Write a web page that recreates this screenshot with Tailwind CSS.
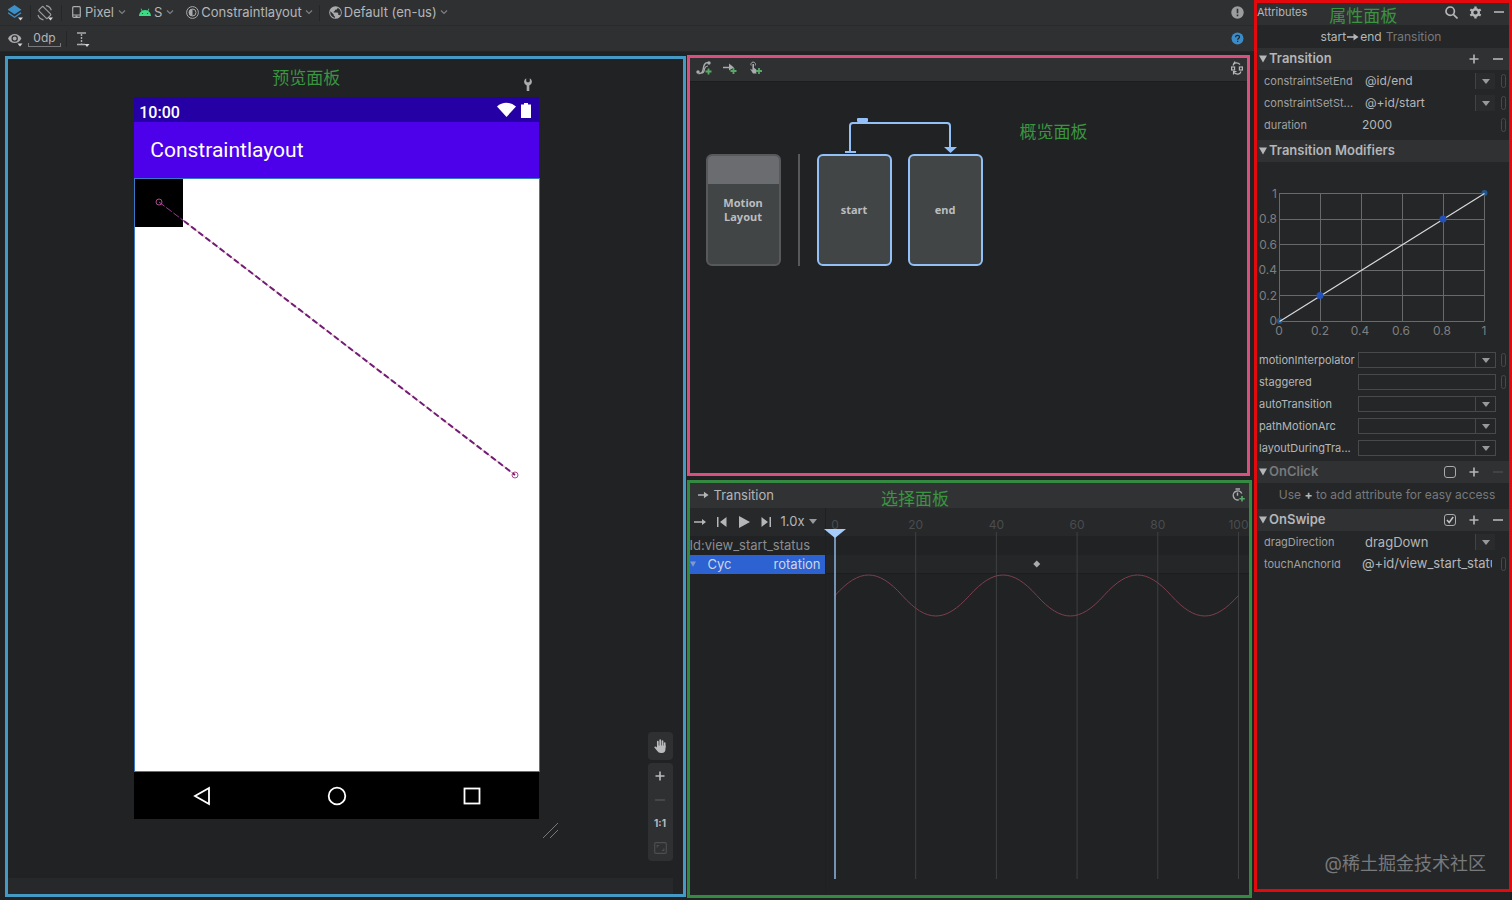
<!DOCTYPE html>
<html lang="zh-CN">

<head>
    <meta charset="UTF-8">
    <meta name="viewport" content="width=device-width, initial-scale=1.0">
    <script src="https://cdn.jsdelivr.net/npm/@tailwindcss/browser@4"></script>
    <title>Motion Editor</title>
</head>

<body class="min-h-screen flex bg-[#212223] text-[#b4b6b8] font-['Inter','Noto_Sans_CJK_SC',sans-serif] text-xs">

    <!-- Shared icons -->
    <svg class="hidden">
        <symbol id="chevron" viewBox="0 0 8 8"><path d="M1 2.5l3 3 3-3" fill="none" stroke="#7d7f81" stroke-width="1.2" /></symbol>
        <symbol id="plus" viewBox="0 0 12 12"><path d="M6 1.5v9M1.5 6h9" stroke="currentColor" stroke-width="1.6" /></symbol>
        <symbol id="minus" viewBox="0 0 12 12"><path d="M1 6h10" stroke="currentColor" stroke-width="1.6" /></symbol>
        <symbol id="caret" viewBox="0 0 8 5"><path d="M0 0h8L4 5z" fill="#97999b" /></symbol>
        <symbol id="fold" viewBox="0 0 8 8"><path d="M0 .5h8L4 7.5z" fill="currentColor" /></symbol>
        <symbol id="arrow" viewBox="0 0 12 10"><path d="M0 5h7" stroke="currentColor" stroke-width="1.6" /><path d="M6.500 1.500L11.500 5l-5 3.500z" fill="currentColor" /></symbol>
    </svg>

    <main class="flex-1 min-w-0 flex flex-col">
        <!-- Toolbars -->
        <div class="h-[26px] flex items-center bg-[#2f3032] border-b border-[#292a2b] px-2 text-[13px]">
            <button aria-label="Surface" class="w-[22px]">
                <svg class="size-4" viewBox="0 0 16 16"><path d="M6.500 0l7 4.700-7 4.600-7-4.600z" fill="#3d8fc7" /><path d="M.500 7.300L6.500 11.400l6-4.100 1 .900-7 4.800-7-4.800z" fill="#3d8fc7" /><path d="M10 12.500h5l-2.500 3z" fill="#d5d6d7" /></svg>
            </button>
            <span class="w-px h-4 bg-[#252627]"></span>
            <button aria-label="Orientation" class="ml-[6px] w-[24px]">
                <svg class="size-4" viewBox="0 0 16 16" fill="none" stroke="#9b9d9f" stroke-width="1.200"><rect x="4.800" y="1.500" width="6" height="12" rx="1" transform="rotate(-45 7.800 7.500)" /><path d="M9 .700a7 7 0 0 1 5.300 4.500M6.500 14.800A7 7 0 0 1 1 10" /><path d="M11 12.500h5l-2.500 3z" fill="#d5d6d7" stroke="none" /></svg>
            </button>
            <span class="w-px h-4 bg-[#252627]"></span>
            <button class="ml-[10px] flex items-center">
                <svg class="w-[9px] h-[12px]" viewBox="0 0 9 12"><rect x=".700" y=".700" width="7.600" height="10.600" rx="1" fill="none" stroke="#a9abad" stroke-width="1.200" /><path d="M1 9h7M3.500 10.300h2" stroke="#a9abad" stroke-width="1.200" /></svg>
                <span class="ml-1">Pixel</span><svg class="ml-1 size-2"><use href="#chevron" /></svg>
            </button>
            <button class="ml-[13px] flex items-center">
                <svg class="w-[12px] h-2" viewBox="0 0 12 8"><path d="M0 8c.100-2.300 1.200-4 2.700-5L1.600.800l.700-.300 1.100 2a6.500 6.500 0 0 1 5.200 0l1.100-2 .700.300L9.300 3C10.800 4 11.900 5.700 12 8z" fill="#3ddb85" /><circle cx="3.500" cy="5.500" r=".6" fill="#2f3032" /><circle cx="8.500" cy="5.500" r=".6" fill="#2f3032" /></svg>
                <span class="ml-[3px]">S</span><svg class="ml-1 size-2"><use href="#chevron" /></svg>
            </button>
            <button class="ml-[12px] flex items-center">
                <svg class="size-[13px]" viewBox="0 0 13 13"><circle cx="6.500" cy="6.500" r="5.900" fill="none" stroke="#a9abad" /><circle cx="6.500" cy="6.500" r="3.500" fill="none" stroke="#a9abad" /><path d="M6.500 3a3.500 3.500 0 0 0 0 7z" fill="#a9abad" /></svg>
                <span class="ml-[2px]">Constraintlayout</span><svg class="ml-[3px] size-2"><use href="#chevron" /></svg>
            </button>
            <span class="ml-[6px] w-px h-4 bg-[#252627]"></span>
            <button class="ml-[9px] flex items-center">
                <svg class="size-[13px]" viewBox="0 0 13 13"><circle cx="6.500" cy="6.500" r="6.300" fill="#a9abad" /><path d="M1.500 5.200l3.200 3.200v1.200l1.200 1v1.300A5.300 5.300 0 0 1 1.500 5.200zM8.500 1.700v.800L7.300 3.700H5.900V5L4.700 5.500v1h3.800l.800.900v1.500h1.200l.600.600a5.300 5.300 0 0 0-2.600-7.800z" fill="#2f3032" /></svg>
                <span class="ml-[2px]">Default (en-us)</span><svg class="ml-[3px] size-2"><use href="#chevron" /></svg>
            </button>
            <button aria-label="Issues" class="ml-auto mr-[2px]">
                <svg class="size-[13px]" viewBox="0 0 13 13"><circle cx="6.500" cy="6.500" r="6.200" fill="#9b9d9f" /><path d="M6.500 2.700v4.500M6.500 8.600v1.700" stroke="#2f3032" stroke-width="1.600" /></svg>
            </button>
        </div>
        <div class="h-[26px] flex items-center bg-[#2f3032] border-b border-[#252627] px-2">
            <button aria-label="View options" class="w-[20px]">
                <svg class="size-4" viewBox="0 0 16 16"><path d="M0 7.500C1.500 4.500 4 3 6.700 3s5.200 1.500 6.700 4.500C11.900 10.500 9.400 12 6.700 12S1.500 10.500 0 7.500z" fill="#a9abad" /><circle cx="6.700" cy="7.500" r="3.200" fill="#2f3032" /><circle cx="6.700" cy="7.500" r="1.900" fill="#a9abad" /><path d="M9.500 12.500h5l-2.500 3z" fill="#d5d6d7" /></svg>
            </button>
            <button class="w-[33px] h-[14px] relative flex items-end justify-center">
                <span class="leading-4">0dp</span>
                <span class="absolute inset-x-0 -bottom-px h-1 border border-t-0 border-[#77797b]"></span>
            </button>
            <span class="ml-[5px] w-px h-4 bg-[#252627]"></span>
            <button aria-label="Guidelines" class="ml-[9px]">
                <svg class="w-[14px] h-4" viewBox="0 0 14 16"><path d="M1 2h9M1 13.500h8" stroke="#a9abad" stroke-width="1.400" /><path d="M5.500 3v9.500" stroke="#a9abad" stroke-width="1.400" stroke-dasharray="2 1" /><path d="M8.500 13h5L11 16z" fill="#d5d6d7" /></svg>
            </button>
            <button aria-label="Help" class="ml-auto mr-[2px]">
                <svg class="size-[13px]" viewBox="0 0 13 13"><circle cx="6.500" cy="6.500" r="6" fill="#3a8bc6" /><path d="M4.600 5.200c0-2.600 3.900-2.400 3.900-.200 0 1.400-1.900 1.400-1.900 2.700M6.600 8.800v1.300" fill="none" stroke="#232425" stroke-width="1.200" /></svg>
            </button>
        </div>

        <div class="flex-1 grid grid-cols-[680fr_565fr] gap-px pt-1 pl-[5px] pr-[2px] pb-[3px]">

            <!-- Preview -->
            <section class="relative flex flex-col border-3 border-[#4499c5]">
                <div class="flex-1 flex flex-col items-center pr-4 pb-[75px]">
                    <div class="relative w-[406px] h-[38px] flex items-center">
                        <h2 class="ml-[138px] text-[17px] leading-5 text-[#3a9440]">预览面板</h2>
                        <button aria-label="Tools" class="ml-auto mr-2 mt-3">
                            <svg class="w-2 h-[13px]" viewBox="0 0 8 13"><path d="M2.200.300v3.200L4 4.600l1.800-1.100V.300A4 4 0 0 1 5.300 7.600V13H2.700V7.600A4 4 0 0 1 2.200.300z" fill="#a9abad" /></svg>
                        </button>
                    </div>
                    <div class="relative w-[406px] flex-1 flex flex-col font-['Roboto',sans-serif] text-white">
                        <div class="h-[25px] mr-px flex items-center bg-[#2500a5] pl-[5px] pr-[6px]">
                            <span class="mt-[6px] text-[16px] leading-5 font-medium">10:00</span>
                            <svg class="ml-auto w-[36px] h-4" viewBox="0 0 36 16"><path d="M0 4.500a14 14 0 0 1 19 0L9.500 15z" fill="#fff" /><path d="M24 2.500h3V1h4v1.500h3V16H24z" fill="#fff" /></svg>
                        </div>
                        <div class="h-14 mr-px flex items-center bg-[#4d00ea] px-4">
                            <span class="text-[21px] leading-6">Constraintlayout</span>
                        </div>
                        <div class="relative flex-1 bg-white border border-[#3b78c4]">
                            <div class="w-12 h-12 bg-black"></div>
                            <svg class="absolute inset-0 size-full" fill="none">
                                <path d="M24 23l25 19" stroke="#a8329c" stroke-dasharray="7 2" />
                                <path d="M49 42l331 254" stroke="#e3a2b4" />
                                <path d="M49 42l331 254" stroke="#701c74" stroke-width="2" stroke-dasharray="6 3" />
                                <circle cx="24" cy="23" r="3" stroke="#b04a8c" />
                                <circle cx="380" cy="296" r="3" stroke="#b04a8c" />
                            </svg>
                        </div>
                        <div class="h-[47px] mr-px flex items-center justify-around bg-black">
                            <svg class="size-5" viewBox="0 0 20 20" fill="none" stroke="#fff" stroke-width="1.800"><path d="M17 2v16L3 10z" /></svg>
                            <svg class="size-5" viewBox="0 0 20 20" fill="none" stroke="#fff" stroke-width="1.800"><circle cx="10" cy="10" r="8.300" /></svg>
                            <svg class="size-5" viewBox="0 0 20 20" fill="none" stroke="#fff" stroke-width="1.800"><rect x="2.500" y="2.500" width="15" height="15" /></svg>
                        </div>
                        <svg class="absolute top-full left-full size-4 mt-1 ml-[2px]" viewBox="0 0 16 16"><path d="M1 15L16 0M8 15l8-8" stroke="#77797b" /></svg>
                    </div>
                </div>
                <div class="absolute right-[10px] bottom-[33px] flex flex-col gap-[3px] text-[#b9bbbd]">
                    <button aria-label="Pan" class="w-[25px] h-7 grid place-items-center rounded bg-[#2f3032]">
                        <svg class="size-[14px]" viewBox="0 0 14 14"><path d="M4.800 8V2.500M7.200 7V1.200M9.500 7V2M11.700 8V4" stroke="#b9bbbd" stroke-width="1.700" stroke-linecap="round" /><path d="M4 6.500h8.500V10c0 2.400-1.300 4-3.700 4H8c-1.800 0-2.800-.700-3.700-2L1.200 8.200c.600-1 1.600-.800 2.800.300z" fill="#b9bbbd" /></svg>
                    </button>
                    <div class="w-[25px] flex flex-col items-center rounded bg-[#2f3032] py-px">
                        <button aria-label="Zoom in" class="h-6 grid place-items-center"><svg class="size-3"><use href="#plus" /></svg></button>
                        <button aria-label="Zoom out" class="h-6 grid place-items-center text-[#4c4e50]"><svg class="size-3"><use href="#minus" /></svg></button>
                        <button class="h-6 text-[10px] font-bold">1:1</button>
                        <button aria-label="Zoom to fit" class="h-6 grid place-items-center"><svg class="w-[13px] h-3" viewBox="0 0 13 12" fill="none" stroke="#4c4e50" stroke-width="1.200"><rect x=".700" y=".700" width="11.600" height="10.600" rx="1" /><path d="M3.200 5.500v-2h2M9.800 6.500v2h-2" /></svg></button>
                    </div>
                </div>
                <div class="absolute left-0 right-[10px] bottom-0 h-4 bg-[#27282a]"></div>
            </section>

            <div class="flex flex-col gap-1 -mt-px -mb-px">
                <!-- Overview -->
                <section class="relative flex-[421] mr-[2px] border-3 border-[#d8517e]">
                    <div class="h-6 flex items-center gap-[11px] bg-[#2f3032] border-b border-[#1c1d1e] pl-[6px] pr-1 pb-1">
                        <button aria-label="Create ConstraintSet">
                            <svg class="size-4" viewBox="0 0 16 16" fill="none"><path d="M2.500 13.500c8 1 1.500-11.500 10.500-11" stroke="#a9abad" stroke-width="1.400" /><path d="M5.500 13c5 0 .500-6.500 6.500-7" stroke="#a9abad" stroke-width="1.200" /><circle cx="2" cy="12" r="1.700" fill="#a9abad" /><circle cx="13" cy="3" r="1.700" fill="#a9abad" /><path d="M12.500 8.500v6M9.500 11.500h6" stroke="#59a869" stroke-width="1.800" /></svg>
                        </button>
                        <button aria-label="Create Transition">
                            <svg class="w-[14px] h-4" viewBox="0 0 14 16" fill="none"><path d="M0 7.500h8" stroke="#a9abad" stroke-width="1.500" /><path d="M6 3.500L11 7.500l-5 3z" fill="#a9abad" /><path d="M10.500 8v6M7.500 11h6" stroke="#59a869" stroke-width="1.800" /></svg>
                        </button>
                        <button aria-label="Create click or swipe handler">
                            <svg class="size-4" viewBox="0 0 14 16" fill="none"><path d="M2.200 5.500a2.300 2.300 0 1 1 4 0" stroke="#a9abad" /><path d="M4.200 4v7" stroke="#a9abad" stroke-width="1.600" /><path d="M1 8.800l2.500 1.200 1.700-2 2.300 1.500v4H4z" fill="#a9abad" /><path d="M10 8v6M7 11h6" stroke="#2f3032" stroke-width="3" /><path d="M10 8v6M7 11h6" stroke="#59a869" stroke-width="1.800" /></svg>
                        </button>
                        <button aria-label="Cycle layouts" class="ml-auto">
                            <svg class="w-[12px] h-[14px]" viewBox="0 0 12 14" fill="none" stroke="#b4b6b8" stroke-width="1.200"><rect x=".600" y="6" width="3" height="3" /><rect x="8.400" y="6" width="3" height="3" /><path d="M2 4.500C2.800 1.500 6.500 1 9 3.500M4 .500L2.200 3.500M10 10.500c-.800 3-4.500 3.500-7 1M2.500 13.500v-3h3" /></svg>
                        </button>
                    </div>
                    <div class="relative flex items-start gap-4 pt-[72px] pl-4 font-['Noto_Sans','Noto_Sans_CJK_SC',sans-serif] font-bold text-[11px] leading-[14px] text-[#bbbdbf]">
                        <button class="w-[75px] h-[112px] flex flex-col rounded-md border-2 border-[#57595b] bg-[#414546] overflow-hidden">
                            <span class="w-full h-7 shrink-0 bg-[#6a6c70]"></span>
                            <span class="w-full pt-3">Motion<br>Layout</span>
                        </button>
                        <span class="ml-px w-[2px] h-[112px] bg-[#57595b]"></span>
                        <div class="relative ml-px flex gap-4">
                            <button class="w-[75px] h-[112px] rounded-md border-2 border-[#93c1f7] bg-[#414546]">start</button>
                            <button class="w-[75px] h-[112px] rounded-md border-2 border-[#93c1f7] bg-[#414546]">end</button>
                            <svg class="absolute left-0 bottom-full w-[166px] h-[38px]" viewBox="0 0 166 38" fill="none" stroke="#93c1f7" stroke-width="2"><path d="M33 35V10a3 3 0 0 1 3-3h94a3 3 0 0 1 3 3v22M28 36h11" /><path d="M127 31h13l-6.500 6z" fill="#93c1f7" stroke="none" /><rect x="40" y="2" width="11" height="4" rx="1" fill="#93c1f7" stroke="none" /></svg>
                        </div>
                        <h2 class="absolute left-[330px] top-10 font-normal text-[17px] leading-5 text-[#3a9440]">概览面板</h2>
                    </div>
                </section>

                <!-- Selection -->
                <section class="flex-[418] flex flex-col border-3 border-[#348a41]">
                    <div class="h-[25px] flex items-center bg-[#303234] pl-2 pr-1">
                        <svg class="w-[11px] h-[10px]"><use href="#arrow" /></svg>
                        <span class="ml-[5px] text-[13px]">Transition</span>
                        <h2 class="ml-[107px] mt-2 text-[17px] leading-5 text-[#3a9440]">选择面板</h2>
                        <button aria-label="Create KeyFrames" class="ml-auto">
                            <svg class="size-[14px]" viewBox="0 0 14 14" fill="none"><path d="M10.800 5.500a4.500 4.500 0 1 0-3 6.300" stroke="#a9abad" stroke-width="1.400" /><path d="M4.500 1h4.500M6.500 4.500v3.200" stroke="#a9abad" stroke-width="1.400" /><path d="M11 8v5.500M8.300 10.700h5.500" stroke="#59a869" stroke-width="1.600" /></svg>
                        </button>
                    </div>
                    <div class="flex-1 flex">
                        <div class="w-[136px] flex flex-col border-r border-[#1f2021]">
                            <div class="h-[28px] flex items-center bg-[#27282a] pl-1 text-[#b4b6b8]">
                                <button aria-label="Loop mode"><svg class="w-3 h-[10px]" viewBox="0 0 12 10"><path d="M0 5h10" stroke="currentColor" stroke-width="1.500" /><path d="M8 2l4 3-4 3z" fill="currentColor" /></svg></button>
                                <button aria-label="Go to start" class="ml-[11px]"><svg class="size-[10px]" viewBox="0 0 10 10" fill="currentColor"><path d="M0 0h1.500v10H0zM9.500 0v10L3 5z" /></svg></button>
                                <button aria-label="Play" class="ml-3"><svg class="w-[11px] h-3" viewBox="0 0 11 12" fill="currentColor"><path d="M0 0l11 6-11 6z" /></svg></button>
                                <button aria-label="Go to end" class="ml-[11px]"><svg class="size-[10px]" viewBox="0 0 10 10" fill="currentColor"><path d="M8.500 0H10v10H8.500zM.500 0v10L7 5z" /></svg></button>
                                <button class="ml-[10px] flex items-center gap-1 text-[13px] whitespace-nowrap">1.0x <svg class="w-2 h-[5px]"><use href="#caret" /></svg></button>
                            </div>
                            <p class="h-[19px] text-[13px] leading-[19px] text-[#8b8d8f] whitespace-nowrap">Id:view_start_status</p>
                            <button class="h-[19px] flex items-center bg-[#2c62d2] text-[#d0d6e2] pr-1 text-[13px]">
                                <svg class="size-[6px] text-[#8299cf]"><use href="#fold" /></svg>
                                <span class="ml-3">Cyc</span>
                                <span class="ml-auto">rotation</span>
                            </button>
                        </div>
                        <div class="relative flex-1">
                            <div class="h-[28px] bg-[#27282a]"></div>
                            <div class="h-[19px]"></div>
                            <div class="h-[19px] bg-[#252627] border-b border-[#1c1d1e]"></div>
                            <!-- Timeline, 0 to 100 -->
                            <div class="absolute top-0 bottom-4 left-[9px] right-[11px]">
                                <svg class="size-full overflow-visible">
                                    <g stroke="#3e4042">
                                        <line x1="20%" x2="20%" y1="24" y2="100%" />
                                        <line x1="40%" x2="40%" y1="24" y2="100%" />
                                        <line x1="60%" x2="60%" y1="24" y2="100%" />
                                        <line x1="80%" x2="80%" y1="24" y2="100%" />
                                        <line x1="100%" x2="100%" y1="24" y2="100%" />
                                    </g>
                                    <g fill="#4a4c4e" text-anchor="middle" font-size="12">
                                        <text x="0%" y="21">0</text>
                                        <text x="20%" y="21">20</text>
                                        <text x="40%" y="21">40</text>
                                        <text x="60%" y="21">60</text>
                                        <text x="80%" y="21">80</text>
                                        <text x="100%" y="21">100</text>
                                    </g>
                                    <svg x="50%" y="56" overflow="visible"><path d="M0-3.500L3.500 0 0 3.500-3.500 0z" fill="#a9abad" /></svg>
                                    <svg y="67" width="100%" height="41" viewBox="0 0 6 2" preserveAspectRatio="none" overflow="visible">
                                        <path d="M0 1C.3642-.333.6358-.333 1 1S1.6358 2.333 2 1S2.6358-.333 3 1S3.6358 2.333 4 1S4.6358-.333 5 1S5.6358 2.333 6 1" fill="none" stroke="#7e3e4e" vector-effect="non-scaling-stroke" />
                                    </svg>
                                    <line x1="0" x2="0" y1="24" y2="100%" stroke="#8fb8e6" stroke-width="1.500" />
                                    <path d="M-11 21h22L0 30z" fill="#a5cdfb" />
                                </svg>
                            </div>
                        </div>
                    </div>
                </section>
            </div>
        </div>
    </main>

    <!-- Attributes -->
    <aside class="relative w-[258px] shrink-0 mb-2 flex flex-col border-3 border-[#e3090c] bg-[#252627] text-[11px]">
        <div class="h-[22px] flex items-center bg-[#2f3032] pr-1 pb-1 text-[#b4b6b8]">
            <span>Attributes</span>
            <h2 class="ml-[22px] mt-2 text-[17px] leading-5 text-[#3a9440]">属性面板</h2>
            <button aria-label="Search" class="ml-auto"><svg class="size-[13px]" viewBox="0 0 13 13" fill="none" stroke="currentColor" stroke-width="1.700"><circle cx="5.200" cy="5.200" r="4.200" /><path d="M8.300 8.300l4.200 4.200" /></svg></button>
            <button aria-label="Settings" class="ml-[11px]"><svg class="size-[13px]" viewBox="0 0 13 13" fill="none" stroke="currentColor"><circle cx="6.500" cy="6.500" r="3.300" stroke-width="2.400" /><path d="M6.500.500v2M6.500 10.500v2M1.300 3.500l1.700 1M10 8.500l1.700 1M1.300 9.500l1.700-1M10 4.500l1.700-1" stroke-width="2.400" /></svg></button>
            <button aria-label="Hide" class="ml-[11px]"><svg class="size-3"><use href="#minus" /></svg></button>
        </div>
        <div class="h-[23px] flex items-center justify-center text-[12px] pr-1">
            <span>start</span><svg class="mx-px w-3 h-[10px]"><use href="#arrow" /></svg><span>end</span>
            <span class="ml-1 text-[#77797b]">Transition</span>
        </div>

        <div class="h-[22px] flex items-center bg-[#303133] pl-[2px] pr-[5px]">
            <svg class="size-2"><use href="#fold" /></svg>
            <h3 class="ml-[2px] text-[13px] font-semibold">Transition</h3>
            <button aria-label="Add" class="ml-auto"><svg class="size-3"><use href="#plus" /></svg></button>
            <button aria-label="Remove" class="ml-3"><svg class="size-3"><use href="#minus" /></svg></button>
        </div>
        <div class="h-[22px] flex items-center pl-[7px] pr-[3px]">
            <label for="setEnd" class="w-[101px] text-[#9fa1a3]">constraintSetEnd</label>
            <div class="relative w-[130px] h-4">
                <select id="setEnd" class="w-full h-4 appearance-none text-[12px] leading-4"><option>@id/end</option></select>
                <span class="absolute right-0 inset-y-0 w-5 grid place-items-center border-l border-[#414345] bg-[#2a2b2c] pointer-events-none"><svg class="w-2 h-[5px]"><use href="#caret" /></svg></span>
            </div>
            <button aria-label="Pick resource" class="ml-auto w-[5px] h-[14px] rounded-sm border border-[#47494b]"></button>
        </div>
        <div class="h-[22px] flex items-center pl-[7px] pr-[3px]">
            <label for="setStart" class="w-[101px] text-[#9fa1a3]">constraintSetSt...</label>
            <div class="relative w-[130px] h-4">
                <select id="setStart" class="w-full h-4 appearance-none text-[12px] leading-4"><option>@+id/start</option></select>
                <span class="absolute right-0 inset-y-0 w-5 grid place-items-center border-l border-[#414345] bg-[#2a2b2c] pointer-events-none"><svg class="w-2 h-[5px]"><use href="#caret" /></svg></span>
            </div>
            <button aria-label="Pick resource" class="ml-auto w-[5px] h-[14px] rounded-sm border border-[#47494b]"></button>
        </div>
        <div class="h-[22px] flex items-center pl-[7px] pr-[3px]">
            <label for="duration" class="w-[98px] text-[#9fa1a3]">duration</label>
            <input id="duration" type="text" value="2000" class="w-[130px] h-4 text-[12px]">
            <button aria-label="Pick resource" class="ml-auto w-[5px] h-[14px] rounded-sm border border-[#47494b]"></button>
        </div>

        <div class="mt-1 h-[22px] flex items-center bg-[#303133] pl-[2px]">
            <svg class="size-2"><use href="#fold" /></svg>
            <h3 class="ml-[2px] text-[13px] font-semibold">Transition Modifiers</h3>
        </div>
        <!-- Easing curve -->
        <svg class="w-full h-[187px]" viewBox="0 0 252 187">
            <path d="M22.500 31.500h205M22.500 57.500h205M22.500 82.500h205M22.500 108.500h205M22.500 133.500h205M22.500 159.500h205M22.500 31v128M63.500 31v128M104.500 31v128M145.500 31v128M186.500 31v128M227.500 31v128" stroke="#67696b" />
            <circle cx="22.500" cy="159" r="3" fill="#22568a" />
            <circle cx="227.500" cy="31" r="3" fill="#22568a" />
            <path d="M22.500 159.500l205-128" stroke="#d8d9da" stroke-width="1.200" />
            <circle cx="63" cy="133.500" r="3.500" fill="#2450b8" />
            <circle cx="186" cy="57" r="3.500" fill="#2450b8" />
            <g fill="#7d7f81" font-size="12" text-anchor="end">
                <text x="20" y="36">1</text>
                <text x="20" y="61">0.8</text>
                <text x="20" y="87">0.6</text>
                <text x="20" y="112">0.4</text>
                <text x="20" y="138">0.2</text>
                <text x="20" y="163">0</text>
            </g>
            <g fill="#7d7f81" font-size="12" text-anchor="middle">
                <text x="22" y="173">0</text>
                <text x="63" y="173">0.2</text>
                <text x="103" y="173">0.4</text>
                <text x="144" y="173">0.6</text>
                <text x="185" y="173">0.8</text>
                <text x="227" y="173">1</text>
            </g>
        </svg>
        <div class="h-[22px] flex items-center pl-[2px] pr-[3px]">
            <label for="interp" class="w-[99px]">motionInterpolator</label>
            <div class="relative w-[138px] h-4">
                <select id="interp" class="w-full h-4 appearance-none border border-[#47494b]"></select>
                <span class="absolute right-0 inset-y-0 w-[21px] grid place-items-center border border-[#47494b] pointer-events-none"><svg class="w-2 h-[5px]"><use href="#caret" /></svg></span>
            </div>
            <button aria-label="Pick resource" class="ml-auto w-[5px] h-[14px] rounded-sm border border-[#47494b]"></button>
        </div>
        <div class="h-[22px] flex items-center pl-[2px] pr-[3px]">
            <label for="staggered" class="w-[99px]">staggered</label>
            <input id="staggered" type="text" class="w-[138px] h-4 border border-[#47494b] px-1">
            <button aria-label="Pick resource" class="ml-auto w-[5px] h-[14px] rounded-sm border border-[#47494b]"></button>
        </div>
        <div class="h-[22px] flex items-center pl-[2px] pr-[3px]">
            <label for="auto" class="w-[99px]">autoTransition</label>
            <div class="relative w-[138px] h-4">
                <select id="auto" class="w-full h-4 appearance-none border border-[#47494b]"></select>
                <span class="absolute right-0 inset-y-0 w-[21px] grid place-items-center border border-[#47494b] pointer-events-none"><svg class="w-2 h-[5px]"><use href="#caret" /></svg></span>
            </div>
        </div>
        <div class="h-[22px] flex items-center pl-[2px] pr-[3px]">
            <label for="arc" class="w-[99px]">pathMotionArc</label>
            <div class="relative w-[138px] h-4">
                <select id="arc" class="w-full h-4 appearance-none border border-[#47494b]"></select>
                <span class="absolute right-0 inset-y-0 w-[21px] grid place-items-center border border-[#47494b] pointer-events-none"><svg class="w-2 h-[5px]"><use href="#caret" /></svg></span>
            </div>
        </div>
        <div class="h-[22px] flex items-center pl-[2px] pr-[3px]">
            <label for="during" class="w-[99px]">layoutDuringTra...</label>
            <div class="relative w-[138px] h-4">
                <select id="during" class="w-full h-4 appearance-none border border-[#47494b]"></select>
                <span class="absolute right-0 inset-y-0 w-[21px] grid place-items-center border border-[#47494b] pointer-events-none"><svg class="w-2 h-[5px]"><use href="#caret" /></svg></span>
            </div>
        </div>

        <div class="mt-[2px] h-[22px] flex items-center bg-[#303133] pl-[2px] pr-[5px]">
            <svg class="size-2"><use href="#fold" /></svg>
            <h3 class="ml-[2px] text-[13px] font-semibold text-[#77797b]">OnClick</h3>
            <input type="checkbox" aria-label="OnClick" class="ml-auto size-3 appearance-none rounded-[3px] border border-[#a9abad]">
            <button aria-label="Add" class="ml-3"><svg class="size-3"><use href="#plus" /></svg></button>
            <button aria-label="Remove" class="ml-3 text-[#47494b]"><svg class="size-3"><use href="#minus" /></svg></button>
        </div>
        <p class="h-[26px] leading-6 text-center pl-2 text-[12px] text-[#77797b]">Use <b class="text-[#b4b6b8]">+</b> to add attribute for easy access</p>
        <div class="h-[22px] flex items-center bg-[#303133] pl-[2px] pr-[5px]">
            <svg class="size-2"><use href="#fold" /></svg>
            <h3 class="ml-[2px] text-[13px] font-semibold">OnSwipe</h3>
            <div class="relative ml-auto size-3">
                <input type="checkbox" checked aria-label="OnSwipe" class="peer block size-3 appearance-none rounded-[3px] border border-[#a9abad]">
                <svg class="absolute inset-0 size-3 hidden peer-checked:block pointer-events-none" viewBox="0 0 12 12"><path d="M3 6l2.200 2.500L9.200 3" fill="none" stroke="#c4c6c8" stroke-width="1.500" /></svg>
            </div>
            <button aria-label="Add" class="ml-3"><svg class="size-3"><use href="#plus" /></svg></button>
            <button aria-label="Remove" class="ml-3"><svg class="size-3"><use href="#minus" /></svg></button>
        </div>
        <div class="h-[22px] flex items-center pl-[7px] pr-[3px]">
            <label for="drag" class="w-[101px] text-[#9fa1a3]">dragDirection</label>
            <div class="relative w-[130px] h-4">
                <select id="drag" class="w-full h-4 appearance-none text-[13px] leading-4"><option>dragDown</option></select>
                <span class="absolute right-0 inset-y-0 w-5 grid place-items-center border-l border-[#414345] bg-[#2a2b2c] pointer-events-none"><svg class="w-2 h-[5px]"><use href="#caret" /></svg></span>
            </div>
        </div>
        <div class="h-[22px] flex items-center pl-[7px] pr-[3px]">
            <label for="anchor" class="w-[98px] text-[#9fa1a3]">touchAnchorId</label>
            <input id="anchor" type="text" value="@+id/view_start_status" class="w-[130px] h-4 text-[13px]">
            <button aria-label="Pick resource" class="ml-auto w-[5px] h-[14px] rounded-sm border border-[#47494b]"></button>
        </div>

        <p class="mt-auto mb-3 mr-[23px] text-right text-[18px] leading-[26px] text-[#77797b]">@稀土掘金技术社区</p>
    </aside>
</body>

</html>
